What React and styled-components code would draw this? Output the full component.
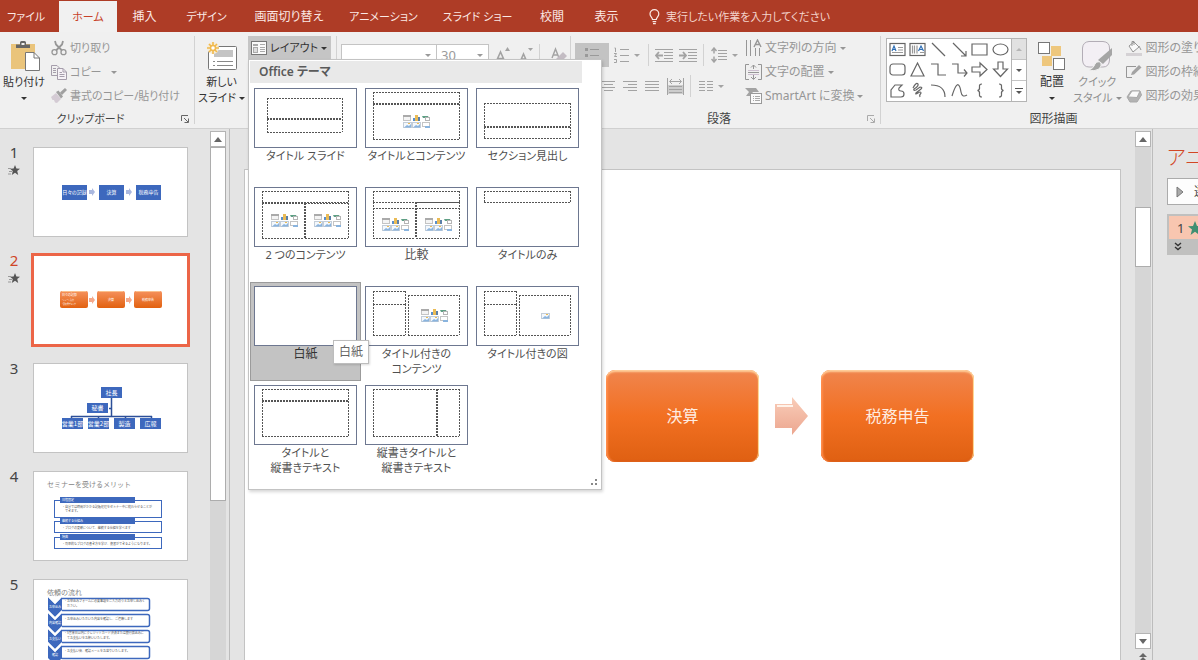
import React from "react";
import styled, { createGlobalStyle, css } from "styled-components";

const GlobalStyle = createGlobalStyle`
  * { box-sizing: border-box; }
  html, body { margin: 0; padding: 0; }
  body, button, input {
    font-family: "Noto Sans", "Noto Sans CJK JP", sans-serif;
    font-size: 12px;
    line-height: 16px;
    font-feature-settings: "palt" 1;
  }
  button {
    margin: 0;
    padding: 0;
    border: 0;
    background: none;
    color: inherit;
    white-space: nowrap;
  }
`;

const App = styled.div`
  display: flex;
  flex-direction: column;
  height: 100vh;
  overflow: hidden;
  background: #e4e4e4;
  color: #444;
`;

/* ---------- tab bar ---------- */

const TabBar = styled.nav`
  display: flex;
  flex: none;
  align-items: stretch;
  height: 32px;
  padding-top: 1px;
  background: #ae3c26;
  color: #fbe9e5;
`;

const Tab = styled.button`
  flex: none;
  width: ${(p) => p.$width}px;
  text-align: center;
  font-size: ${(p) => (p.$kana ? 11 : 12)}px;
  ${(p) =>
    p.$active &&
    css`
      background: #f1f1f1;
      color: #c8432a;
    `}
`;

const TellMe = styled.label`
  display: flex;
  align-items: center;
  gap: 6px;
  flex: 1;
  padding-left: 15px;
`;

const TellMeInput = styled.input`
  flex: 1;
  min-width: 0;
  border: 0;
  padding: 0;
  background: none;
  color: inherit;
  font-size: 11px;
  outline: none;
  &::placeholder {
    color: #f3d3cb;
    opacity: 1;
  }
`;

/* ---------- ribbon ---------- */

const Ribbon = styled.div`
  position: relative;
  z-index: 2;
  display: flex;
  flex: none;
  align-items: flex-start;
  height: 97px;
  padding-top: 4px;
  background: #f0f0f0;
  border-bottom: 1px solid #d0d0d0;
`;

const Group = styled.section`
  flex: none;
  width: ${(p) => p.$width}px;
`;

const GroupBody = styled.div`
  display: flex;
  height: 74px;
  padding-left: ${(p) => p.$pad || 0}px;
`;

const GroupFooter = styled.div`
  display: flex;
  align-items: center;
  height: 18px;
  padding-right: 5px;
`;

const GroupName = styled.span`
  flex: 1;
  text-align: center;
  font-size: ${(p) => (p.$kana ? 11 : 12)}px;
`;

const Divider = styled.i`
  flex: none;
  width: 1px;
  height: 88px;
  background: #d2d2d2;
`;

const SmallDivider = styled.i`
  flex: none;
  width: 1px;
  height: 22px;
  margin: 0 3px;
  background: #d2d2d2;
`;

const Caret = styled.i`
  flex: none;
  display: inline-block;
  border: 3px solid transparent;
  border-bottom-width: 0;
  border-top-color: currentColor;
`;

const BigButton = styled.button`
  display: flex;
  flex-direction: column;
  align-items: center;
  width: ${(p) => p.$width}px;
  height: 74px;
  padding-top: 2px;
  font-size: ${(p) => (p.$kana ? 11 : 12)}px;
  color: ${(p) => (p.$muted ? "#8f8f8f" : "#333")};
`;

const BigIcon = styled.span`
  display: flex;
  align-items: center;
  justify-content: center;
  height: 36px;
`;

const BigLine = styled.span`
  display: flex;
  align-items: center;
  gap: 3px;
  height: 16px;
`;

const CommandColumn = styled.div`
  display: flex;
  flex-direction: column;
  padding-left: 4px;
`;

const Command = styled.button`
  display: flex;
  align-items: center;
  gap: 3px;
  height: 24px;
  color: #969696;
  font-size: ${(p) => (p.$kana ? 11 : 12)}px;
`;

const CommandText = styled.span`
  padding-right: ${(p) => (p.$space ? 6 : 0)}px;
`;

const MenuAnchor = styled.div`
  position: relative;
  margin-left: 2px;
`;

const LayoutButton = styled.button`
  display: flex;
  align-items: center;
  gap: 3px;
  width: 83px;
  height: 24px;
  padding-left: 3px;
  background: #c5c5c5;
  color: #333;
  font-size: 11px;
`;

const FieldRow = styled.div`
  display: flex;
  align-items: center;
  height: 24px;
  margin-top: 7px;
`;

const Combo = styled.label`
  display: flex;
  align-items: center;
  width: ${(p) => p.$width}px;
  height: 22px;
  margin-right: -1px;
  padding: 0 5px 0 4px;
  border: 1px solid #c4c4c4;
  background: #fff;
  color: #9a9a9a;
`;

const ComboInput = styled.input`
  flex: 1;
  min-width: 0;
  padding: 0;
  border: 0;
  outline: none;
  background: none;
  color: inherit;
  font-size: 13px;
`;

const ParagraphTools = styled.div`
  width: 166px;
`;

const ToolButton = styled.button`
  display: flex;
  flex: none;
  align-items: center;
  justify-content: center;
  gap: 5px;
  width: ${(p) => p.$width}px;
  height: 24px;
  color: #a3a3a3;
  background: ${(p) => (p.$active ? "#c3c3c3" : "none")};
`;

const Gallery = styled.div`
  display: flex;
  flex: none;
  width: 141px;
  height: 64px;
  margin-top: 2px;
  border: 1px solid #b4b4b4;
  background: #fff;
`;

const ShapeGrid = styled.div`
  display: grid;
  grid-template-columns: repeat(6, 1fr);
  grid-template-rows: repeat(3, 1fr);
  flex: 1;
`;

const ShapeButton = styled.button`
  display: flex;
  align-items: center;
  justify-content: center;
  color: #666;
`;

const GallerySide = styled.div`
  display: flex;
  flex-direction: column;
  width: 15px;
  border-left: 1px solid #b4b4b4;
`;

const GalleryStep = styled.button`
  display: flex;
  flex: 1;
  flex-direction: column;
  align-items: center;
  justify-content: center;
  gap: 2px;
  color: ${(p) => (p.$off ? "#b5b5b5" : "#555")};
  background: ${(p) => (p.$off ? "#e1e1e1" : "#fff")};
  & + & {
    border-top: 1px solid #c4c4c4;
  }
`;

/* ---------- layout menu ---------- */

const Menu = styled.div`
  position: absolute;
  top: 23px;
  left: 0;
  width: 354px;
  height: 431px;
  padding: 1px;
  background: #fff;
  border: 1px solid #c3c3c3;
  box-shadow: 1px 2px 3px rgba(0, 0, 0, 0.16);
`;

const MenuTitle = styled.h2`
  height: 22px;
  margin: 0 18px 1px 0;
  padding-left: 9px;
  background: #e9e9e9;
  font-size: 12px;
  font-weight: 600;
  line-height: 22px;
  color: #5a5a5a;
`;

const LayoutGrid = styled.div`
  display: grid;
  grid-template-columns: repeat(3, 111px);
  grid-auto-rows: 99px;
`;

const LayoutItem = styled.button`
  display: flex;
  flex-direction: column;
  align-items: center;
  padding: 3px 3px 0;
  border: 1px solid transparent;
  color: #505050;
  ${(p) =>
    p.$active &&
    css`
      background: #c3c3c3;
      border-color: #9b9b9b;
      color: #333;
    `}
`;

const LayoutLabel = styled.span`
  font-size: ${(p) => (p.$kana ? 11 : 12)}px;
  line-height: 15px;
  white-space: pre;
`;

const Tooltip = styled.div`
  position: absolute;
  left: 84px;
  top: 280px;
  padding: 3px 5px;
  border: 1px solid #bdbdbd;
  background: #fff;
  box-shadow: 1px 1px 2px rgba(0, 0, 0, 0.15);
  color: #666;
`;

const Grip = styled.svg`
  position: absolute;
  right: 3px;
  bottom: 2px;
`;

/* ---------- workspace ---------- */

const Workspace = styled.main`
  display: flex;
  flex: 1;
  min-height: 0;
`;

const SlideList = styled.ol`
  flex: none;
  width: 210px;
  margin: 0;
  padding: 15px 0 0;
  list-style: none;
  overflow: hidden;
`;

const SlideRow = styled.li`
  display: flex;
  height: 108px;
`;

const SlideMark = styled.div`
  display: flex;
  flex-direction: column;
  align-items: center;
  gap: 4px;
  width: 28px;
  margin-right: ${(p) => (p.$active ? 3 : 5)}px;
  color: ${(p) => (p.$active ? "#cf4527" : "#444")};
  font-size: 15px;
`;

const Thumb = styled.button`
  display: flex;
  height: 90px;
  margin-top: 3px;
  border: 1px solid #c3c3c3;
  background: #fff;
  ${(p) =>
    p.$active &&
    css`
      height: 94px;
      margin-top: 1px;
      border: 3px solid #ec6547;
    `}
`;

const ScrollBar = styled.div`
  display: flex;
  flex: none;
  flex-direction: column;
  width: 16px;
  padding-top: 2px;
`;

const ScrollTrack = styled.div`
  display: flex;
  flex-direction: column;
  flex: 1;
  padding-top: ${(p) => p.$offset || 0}px;
  background: #d6d6d6;
`;

const ScrollThumb = styled.div`
  height: ${(p) => p.$size};
  border: 1px solid #adadad;
  background: #fff;
`;

const ScrollButton = styled.button`
  display: flex;
  align-items: center;
  justify-content: center;
  flex: none;
  height: 16px;
  border: 1px solid #b4b4b4;
  background: #fff;
`;

const PageStep = styled.button`
  display: flex;
  justify-content: center;
  flex: none;
  height: 11px;
  padding-top: 4px;
`;

const PaneEdge = styled.i`
  flex: none;
  width: 1px;
  margin-left: ${(p) => p.$gap}px;
  background: #bcbcbc;
`;

const Editor = styled.div`
  flex: 1;
  min-width: 0;
  padding: 40px 14px 0;
  overflow: hidden;
`;

const Slide = styled.div`
  display: flex;
  align-items: center;
  justify-content: center;
  aspect-ratio: 16 / 9;
  background: #fff;
  border: 1px solid #c3c3c3;
`;

const StepBox = styled.div`
  display: flex;
  flex: none;
  align-items: center;
  justify-content: center;
  width: 153px;
  height: 92px;
  border-radius: 9px;
  background: linear-gradient(#f0854e, #f27022 50%, #df6012);
  box-shadow: inset 0 3px 2px -1px #ffd09c, inset 3px 0 2px -1px #ff8b49,
    inset -2px 0 1px -1px #ffe3a0, inset 0 -2px 1px #dd5e17;
  color: #ffece0;
  font-size: 16px;
  line-height: 24px;
  font-feature-settings: normal;
`;

const StepArrow = styled.svg`
  flex: none;
  margin: 0 13px 0 16px;
`;

const AnimationPane = styled.aside`
  flex: none;
  width: 45px;
  padding: 16px 0 0 14px;
  overflow: hidden;
  white-space: nowrap;
`;

const PaneTitle = styled.h2`
  margin: 0 0 9px;
  font-size: 20px;
  line-height: 24px;
  font-weight: 300;
  color: #d24726;
  font-family: "Noto Sans CJK JP", sans-serif;
`;

const PlayButton = styled.button`
  display: flex;
  align-items: center;
  gap: 10px;
  width: 160px;
  height: 27px;
  padding-left: 8px;
  border: 1px solid #ababab;
  background: #fdfdfd;
`;

const EffectBox = styled.div`
  width: 160px;
  margin-top: 9px;
  border: 2px solid #c0c0bf;
  background: #c0c0bf;
`;

const EffectRow = styled.div`
  display: flex;
  align-items: center;
  gap: 4px;
  height: 23px;
  padding-left: 8px;
  background: #f8c6b0;
  font-size: 13px;
`;

const ExpandButton = styled.button`
  display: block;
  height: 14px;
  padding-left: 5px;
`;

/* ---------- drawings ---------- */

const Svg = ({ w = 16, h = 16, children, ...rest }) => (
  <svg
    width={w}
    height={h}
    viewBox={`0 0 ${w} ${h}`}
    fill="none"
    stroke="currentColor"
    aria-hidden="true"
    style={{ flex: "none", display: "block" }}
    {...rest}
  >
    {children}
  </svg>
);

const UpArrow = () => (
  <Svg w={8} h={5} stroke="none">
    <path d="M0 5L4 0L8 5Z" fill="#666" />
  </Svg>
);
const DownArrow = () => (
  <Svg w={8} h={5} stroke="none">
    <path d="M0 0L4 5L8 0Z" fill="#666" />
  </Svg>
);

const BulbIcon = () => (
  <Svg w={11} h={16} strokeWidth="1.2">
    <path d="M3.5 10.5C3.5 8.5 1 7.6 1 5A4.3 4.3 0 0 1 9.8 5C9.8 7.6 7.3 8.5 7.3 10.5ZM3.6 12.6H7.2M4 14.6H6.8" />
  </Svg>
);

const LauncherIcon = ({ muted }) => (
  <Svg w={8} h={8} stroke={muted ? "#aaa" : "#666"}>
    <path d="M.5 6V.5H7M3 3L7 7M7.5 3.5V7.5H3.5" />
  </Svg>
);

const PasteIcon = () => (
  <Svg w={32} h={32} stroke="none">
    <rect x="3" y="4" width="24" height="25" fill="#eac47b" />
    <path d="M8 8V4.5H12V2.5Q12 1 13.5 1H16.5Q18 1 18 2.5V4.5H22V8Z" fill="#666" />
    <rect x="13.5" y="3" width="3" height="2" fill="#f0f0f0" />
    <path d="M17.500 12.500H26L31.500 18V30.500H17.500Z" fill="#fff" stroke="#777" />
    <path d="M26 12.500V18H31.500" stroke="#777" />
  </Svg>
);

const CutIcon = () => (
  <Svg strokeWidth="1.3">
    <path d="M4 1L5 4.500L11 10.500M12 1L11 4.500L5 10.500" strokeWidth="1.800" />
    <circle cx="3.500" cy="12.200" r="2.500" />
    <circle cx="12.500" cy="12.200" r="2.500" />
  </Svg>
);

const CopyIcon = () => (
  <Svg stroke="#a59dab">
    <path d="M6.500 11.500H.5V1.500H6L8.500 4" />
    <path d="M6.500 4.500H12L15.500 8V15.500H6.500Z" fill="#f6f2f7" />
    <path d="M12 4.500V8H15M8.500 8.500H11M8.500 10.500H13.500M8.500 12.500H13.500M2 4.500H5M2 6.500H5M2 8.500H5" />
  </Svg>
);

const BrushIcon = () => (
  <Svg stroke="none">
    <path d="M0 9L5 5L10 11L6 15L4 14.500L3 12L1.500 12Z" fill="#d4cbd4" />
    <path d="M5 4L7.500 2.500L12 8.500L10 10.500Z" fill="#a0a0a0" />
    <path d="M9 4.500L14 0L16 2L11 7Z" fill="#a0a0a0" />
  </Svg>
);

const NewSlideIcon = () => (
  <Svg w={32} h={30} stroke="none">
    <rect x="2.500" y="5.500" width="28" height="23" rx="1" fill="#fff" stroke="#777" />
    <rect x="8" y="9" width="19" height="7" fill="#c4c4c4" />
    <path d="M7 20.500H9M11 20.500H27M7 24.500H9M11 24.500H27" stroke="#888" />
    <circle cx="7" cy="7" r="6" fill="#f5ecd8" />
    <path d="M7 1V4M7 10V13M1 7H4M10 7H13M3 3L5 5M9 9L11 11M11 3L9 5M5 9L3 11" stroke="#f0b94e" strokeWidth="1.600" />
    <circle cx="7" cy="7" r="2.500" fill="#fff" stroke="#f0b94e" strokeWidth="1.500" />
  </Svg>
);

const LayoutIcon = () => (
  <Svg stroke="#777">
    <rect x=".5" y="1.500" width="15" height="13" fill="#fafafa" />
    <rect x="2" y="4" width="5" height="2" fill="#aaa" stroke="none" />
    <rect x="2.500" y="7.500" width="4" height="5" fill="#ddd" stroke="#aaa" />
    <path d="M9 4.500H14M9 7.500H14M9 9.500H14M9 11.500H14" stroke="#aaa" />
  </Svg>
);

const FontSizeIcon = ({ up }) => (
  <Svg w={16} h={16} stroke="#a3a3a3" strokeWidth="1.600">
    <path d={up ? "M1 15L5.500 5L10 15M2.600 11.500H8.400" : "M1 15L4.500 7L8 15M2.400 12H6.600"} />
    <path d={up ? "M10 4L12.500 0L15 4Z" : "M9 1H14L11.500 4Z"} fill="#a3a3a3" stroke="none" />
  </Svg>
);

const ClearIcon = () => (
  <Svg stroke="#a3a3a3" strokeWidth="1.400">
    <path d="M1 11L4.500 2L8 11M2.500 8H6.500" />
    <path d="M5 12L12 5L16 9L10 15H7Z" fill="#c3bcc3" stroke="none" />
  </Svg>
);

const BulletIcon = () => (
  <Svg w={14} h={16} stroke="#999">
    <path d="M5 2.500H14M5 8.500H14" />
    <path d="M0 2.500H3M0 8.500H3" strokeWidth="3" />
  </Svg>
);
const NumberIcon = () => (
  <Svg w={15} h={16}>
    <path d="M6 2.500H15M6 8.500H15M6 14.500H15" />
    <path d="M.5 1H1.500V5M0 6.500H2.500L.5 9.500H3M0 12.500H2.500V15.500H0" />
  </Svg>
);
const IndentIcon = ({ out }) => (
  <Svg w={18} h={16}>
    <path d="M0 2.500H18M9 5.500H18M9 8.500H18M9 11.500H18M0 14.500H18" />
    <path d={out ? "M8 8.500H1M4 5L1 8.500L4 12" : "M0 8.500H7M4 5L7 8.500L4 12"} strokeWidth="1.800" />
  </Svg>
);
const SpacingIcon = () => (
  <Svg w={16} h={16}>
    <path d="M7 3.500H16M7 6.500H16M7 9.500H16M7 12.500H16" />
    <path d="M3 1.500V6.500M0.500 4L3 1L5.500 4M3 9.500V14.500M0.500 12L3 15L5.500 12" strokeWidth="1.500" />
  </Svg>
);
const alignRows = {
  left: "M0 1.500H14M0 4.500H9M0 7.500H14M0 10.500H9",
  center: "M0 1.500H14M3 4.500H12M0 7.500H14M3 10.500H12",
  right: "M0 1.500H14M5 4.500H14M0 7.500H14M5 10.500H14",
  justify: "M0 1.500H14M0 4.500H14M0 7.500H14M0 10.500H14",
  columns: "M0 1.500H6M8 1.500H14M0 4.500H6M8 4.500H14M0 7.500H6M8 7.500H14M0 10.500H6M8 10.500H14",
};
const AlignIcon = ({ kind }) => (
  <Svg w={14} h={12}>
    <path d={alignRows[kind]} />
  </Svg>
);
const DistributeIcon = () => (
  <Svg w={17} h={17}>
    <path d="M.5 0V17M16.500 0V17M3 3.500H14M5 1L2.500 3.500L5 6M12 1L14.500 3.500L12 6" />
    <rect x="1" y="7" width="15" height="9" fill="#ccc" stroke="none" />
    <path d="M2 8.500H15M2 11.500H15M2 14.500H15" />
  </Svg>
);

const TextDirectionIcon = () => (
  <Svg w={17} h={18}>
    <path d="M1.500 1V17M5.500 1V17M10.500 9V17M14.500 9V17" />
    <path d="M9 8L12.500 1L16 8M10 5.500H15" strokeWidth="1.400" />
  </Svg>
);
const TextPlaceIcon = () => (
  <Svg w={17} h={16}>
    <path d="M4 .5H.5V15.500H4M13 .5H16.500V15.500H13M3 8.500H14M8.500 1V5M6 3.500L8.500 1L11 3.500M8.500 15V11M6 13L8.500 15.500L11 13" />
    <path d="M3 6.500H14M3 10.500H14" stroke="#cdbfd0" />
  </Svg>
);
const SmartArtIcon = () => (
  <Svg w={17} h={18} stroke="none">
    <path d="M0 1H11L14 5H8L5 9H1L4 5Z" fill="#a3a3a3" />
    <rect x="5.500" y="6.500" width="11" height="10" fill="#fafafa" stroke="#999" />
    <path d="M8 9.500H9M10 9.500H15M8 11.500H9M10 11.500H15M8 13.500H9M10 13.500H15" stroke="#aaa" />
  </Svg>
);

const Shape = ({ d, children }) => (
  <Svg w={17} h={17} strokeWidth="1.2">
    {d && <path d={d} />}
    {children}
  </Svg>
);

const shapes = [
  { name: "テキスト ボックス", body: <Shape><rect x="1" y="2.500" width="15" height="12" /><path d="M9 6.500H14M9 9H14M3 11.500H14" stroke="#999" /><path d="M3 10L5 5L7 10M4 8.500H6" stroke="#2f6fb5" /></Shape> },
  { name: "縦書きテキスト ボックス", body: <Shape><rect x="1" y="2.500" width="15" height="12" /><path d="M3.500 4.500V12.500M5.500 4.500V12.500M8 4.500V12.500M11 11.500H15" stroke="#999" /><path d="M9.500 10L12 5L14.500 10M10.500 8.500H13.500" stroke="#2f6fb5" /></Shape> },
  { name: "直線", d: "M2 2L15 15" },
  { name: "矢印", d: "M2 2L15 15M15 10V15H10" },
  { name: "正方形/長方形", d: "M1 3H16V14H1Z" },
  { name: "楕円", body: <Shape><ellipse cx="8.500" cy="8.500" rx="7.500" ry="5.500" /></Shape> },
  { name: "角丸四角形", body: <Shape><rect x="1" y="3" width="15" height="11" rx="3" /></Shape> },
  { name: "二等辺三角形", d: "M8.500 2L15 15H2Z" },
  { name: "カギ線コネクタ", d: "M1 3H8V14H16" },
  { name: "カギ線矢印コネクタ", d: "M1 3H7V12H16M13 8.500L16 12L13 15.500" },
  { name: "右矢印", d: "M1 6H9V2L16 8.500L9 15V11H1Z" },
  { name: "下矢印", d: "M6 1H11V8H15.500L8.500 15.500L1.500 8H6Z" },
  { name: "フリーフォーム: 図形", d: "M2 15V8L6 3H13L10 6Q9 9 12 9Q15 9 15 12Q15 15 12 15Z" },
  { name: "フリーフォーム: フリーハンド", d: "M4 6Q7 0 9 2Q10 4 5 7Q4 9 7 8L11 5Q14 5 12 7L7 11Q6 13 9 11Q12 9 12 11Q10 13 11 15" },
  { name: "円弧", d: "M1 3Q15 3 15 15" },
  { name: "曲線", d: "M1 14Q5 1 7.500 3Q9 4 10 10Q11 16 16 13" },
  { name: "左中かっこ", d: "M11 2Q8 2 8.500 5Q9 8 6.500 8.500Q9 9 8.500 12Q8 15 11 15" },
  { name: "右中かっこ", d: "M7 2Q10 2 9.500 5Q9 8 11.500 8.500Q9 9 9.500 12Q10 15 7 15" },
];

const ArrangeIcon = () => (
  <Svg w={30} h={30} stroke="#777">
    <rect x="14" y="5" width="10" height="10" fill="#eec77d" stroke="none" />
    <rect x="5" y="15" width="10" height="10" fill="#eec77d" stroke="none" />
    <rect x="1.500" y="1.500" width="11" height="11" fill="#fff" />
    <rect x="16.500" y="17.500" width="11" height="11" fill="#fff" />
  </Svg>
);
const QuickStyleIcon = () => (
  <Svg w={32} h={32} stroke="#b3adb6">
    <path d="M8 1.500H22Q28.500 2 28.500 8V20Q28 27 22 27H8Q2 27 1.500 20V8Q2 2 8 1.500Z" fill="#f3eff4" />
    <path d="M17 20L31 8V15L22 24Z" fill="#a5a5a5" stroke="none" />
    <path d="M8 30Q13 28 14 24Q17 20 20 23Q21 26 18 29Q13 32 8 30Z" fill="#a5a5a5" stroke="#f0f0f0" />
  </Svg>
);
const FillIcon = () => (
  <Svg w={17} h={17}>
    <path d="M3 6L8 2L13 7L7 12Z" fill="#fafafa" />
    <path d="M6 6V1.500H8V5M13 6L15 10" />
    <rect x="0" y="13" width="16" height="3" fill="#d5d2d5" stroke="none" />
  </Svg>
);
const OutlineIcon = () => (
  <Svg w={17} h={17}>
    <path d="M10 2.500H.5V13.500H6" />
    <path d="M5 11L6 8L13 1L15.500 3.500L8 10.500Z" fill="#a3a3a3" stroke="none" />
  </Svg>
);
const EffectIcon = () => (
  <Svg w={17} h={17} stroke="#a9a9a9">
    <path d="M1 9L5 3H14L15.500 7L11 14H4Z" fill="#b3b3b3" />
    <path d="M2 9L6 3H14L11 9.500Z" fill="#fafafa" />
  </Svg>
);

const StarMark = () => (
  <Svg w={12} h={12} stroke="none">
    <path d="M7 1L8.400 4.600L12 4.800L9.200 7.100L10.200 11L7 8.800L3.800 11L4.800 7.100L2 4.800L5.600 4.600Z" fill="#555" />
    <path d="M0 4.500H3M1 7.500H4M0 10H3" stroke="#999" />
  </Svg>
);

/* A block of miniature content placeholders: table, chart, SmartArt, pictures and video */
const ContentIcons = ({ x, y }) => (
  <g transform={`translate(${x} ${y})`}>
    <rect x="0.500" y="0.500" width="7" height="5" fill="#f4f4f4" stroke="#c4c4c4" />
    <path d="M0 1H8" stroke="#aaa" strokeWidth="2" />
    <path d="M11 3V6" stroke="#5b8fcb" strokeWidth="2" />
    <path d="M13.500 0V6" stroke="#eabb55" strokeWidth="3" />
    <path d="M16 2V6" stroke="#5b7fa8" strokeWidth="2" />
    <path d="M19 1H25L26 3H20Z" fill="#5f9f84" />
    <rect x="22.500" y="2.500" width="4" height="3" fill="#fff" stroke="#b5b5b5" />
    <PictureMini x={0} y={7} />
    <PictureMini x={9} y={7} />
    <rect x="19.500" y="7.500" width="7" height="4" fill="#fff" stroke="#c4c4c4" />
    <path d="M22 12H27" stroke="#8ab4de" strokeWidth="2" />
  </g>
);
const PictureMini = ({ x, y }) => (
  <g transform={`translate(${x} ${y})`}>
    <rect x="0.500" y="0.500" width="8" height="5" fill="#f4f8fc" stroke="#c3cdd8" />
    <path d="M1 5.500L4 3L6 4L8 2V5.500Z" fill="#8ab4de" />
    <rect x="5" y="1" width="2" height="1" fill="#eabb55" />
  </g>
);

const LayoutArt = ({ boxes, icons = [], picture }) => (
  <Svg w={103} h={60} stroke="none">
    <rect x=".5" y=".5" width="102" height="59" fill="#fff" stroke="#6d7790" />
    {boxes.map(([x1, y1, x2, y2], i) => (
      <path
        key={i}
        d={`M${x1} ${y1 + 0.5}H${x2}M${x1} ${y2 + 0.5}H${x2}M${x1 + 0.5} ${y1}V${y2}M${x2 + 0.5} ${y1}V${y2}`}
        stroke="#555"
        strokeDasharray="2 1"
      />
    ))}
    {icons.map(([x, y], i) => (
      <ContentIcons key={i} x={x} y={y} />
    ))}
    {picture && <PictureMini x={picture[0]} y={picture[1]} />}
  </Svg>
);

const layouts = [
  { label: "タイトル スライド", boxes: [[13, 10, 88, 30], [13, 31, 88, 44]] },
  { label: "タイトルとコンテンツ", boxes: [[8, 4, 94, 15], [8, 16, 94, 51]], icons: [[38, 27]] },
  { label: "セクション見出し", boxes: [[8, 15, 94, 38], [8, 39, 94, 50]] },
  { label: "2 つのコンテンツ", boxes: [[8, 4, 94, 15], [8, 16, 50, 51], [51, 16, 94, 51]], icons: [[17, 27], [60, 27]] },
  { label: "比較", kanji: true, boxes: [[8, 4, 94, 15], [8, 15, 50, 21], [51, 15, 94, 21], [8, 21, 50, 51], [51, 21, 94, 51]], icons: [[17, 31], [60, 31]] },
  { label: "タイトルのみ", boxes: [[8, 4, 94, 15]] },
  { label: "白紙", kanji: true, boxes: [], active: true },
  { label: "タイトル付きの\nコンテンツ", boxes: [[8, 5, 40, 18], [8, 18, 40, 49], [43, 9, 94, 49]], icons: [[56, 23]] },
  { label: "タイトル付きの図", boxes: [[8, 5, 40, 18], [8, 18, 40, 49], [43, 9, 94, 49]], picture: [65, 27] },
  { label: "タイトルと\n縦書きテキスト", boxes: [[8, 4, 94, 15], [8, 16, 94, 51]] },
  { label: "縦書きタイトルと\n縦書きテキスト", boxes: [[8, 4, 71, 51], [72, 4, 94, 51]] },
];

/* ---------- slide thumbnails ---------- */

const BLUE = "#3d68bd";

const T = ({ x, y, size = 4, fill = "#fff", anchor = "middle", wide, children }) => (
  <text
    x={x}
    y={y}
    fontSize={size}
    fill={fill}
    textAnchor={anchor}
    stroke="none"
    fontFamily="Noto Sans CJK JP"
    style={wide ? { fontFeatureSettings: "normal" } : undefined}
  >
    {children}
  </text>
);

const BlueBox = ({ x, y, w, h, label, size, ty }) => (
  <g>
    <rect x={x} y={y} width={w} height={h} fill={BLUE} />
    <T x={x + w / 2} y={ty} size={size}>{label}</T>
  </g>
);

const MiniArrow = ({ x, fill }) => (
  <path d={`M${x} 42H${x + 3}V40L${x + 6} 44L${x + 3} 48V46H${x}Z`} fill={fill} />
);

const ThumbOne = () => (
  <Svg w={153} h={88} stroke="none">
    <BlueBox x={28} y={37} w={25} h={15} label="日々の記録" size={5} ty={46} />
    <BlueBox x={65} y={37} w={25} h={15} label="決算" size={5} ty={46} />
    <BlueBox x={102} y={37} w={25} h={15} label="税務申告" size={5} ty={46} />
    <MiniArrow x={55} fill="#aab8df" />
    <MiniArrow x={92} fill="#aab8df" />
  </Svg>
);

const ThumbTwo = () => (
  <Svg w={153} h={88} stroke="none">
    <defs>
      <linearGradient id="mini" x1="0" y1="0" x2="0" y2="1">
        <stop offset="0" stopColor="#f5915c" />
        <stop offset="1" stopColor="#e26110" />
      </linearGradient>
    </defs>
    {[26, 63, 100].map((x) => (
      <g key={x}>
        <rect x={x} y="35" width="28" height="17" rx="2" fill="url(#mini)" />
        <path d={`M${x + 2} 35.500H${x + 26}`} stroke="#fbc08c" />
      </g>
    ))}
    <T x={28} y={40} size={3} anchor="start">日々の記録</T>
    <T x={28} y={45} size={2} anchor="start">・レシート入力</T>
    <T x={28} y={49} size={2} anchor="start">・領収書チェック</T>
    <T x={77} y={45} size={3}>決算</T>
    <T x={114} y={45} size={3}>税務申告</T>
    <MiniArrow x={55} fill="#f4a98c" />
    <MiniArrow x={92} fill="#f4a98c" />
  </Svg>
);

const ThumbThree = () => (
  <Svg w={153} h={88} stroke="none">
    <path d="M77.500 34V52M75 44.500H78M37 52.500H118M37.500 52V55M64.500 52V55M91.500 52V55M117.500 52V55" stroke="#2c4f99" strokeWidth="1.500" />
    <BlueBox x={67} y={23} w={21} h={11} label="社長" size={6} ty={31} />
    <BlueBox x={53} y={39} w={21} h={10} label="秘書" size={6} ty={46} />
    <BlueBox x={28} y={54} w={21} h={11} label="営業1部" size={6} ty={62} />
    <BlueBox x={54} y={54} w={21} h={11} label="営業2部" size={6} ty={62} />
    <BlueBox x={80} y={54} w={21} h={11} label="製造" size={6} ty={62} />
    <BlueBox x={106} y={54} w={21} h={11} label="広報" size={6} ty={62} />
  </Svg>
);

const merits = [
  { y: 28, h: 17, title: "日程固定", lines: ["・自分では時間がかかる記帳処理をセミナー中に終わらせることが", "　できます。"] },
  { y: 49, h: 11, title: "継続する仕組み", lines: ["・ブログの更新について、継続する仕組を学べます"] },
  { y: 65, h: 11, title: "特典", lines: ["・効率的なブログの書き方を学び、復習ができるようになります。"] },
];

const ThumbFour = () => (
  <Svg w={153} h={88} stroke="none">
    <T x={13} y={15} size={7} fill="#858585" anchor="start" wide>セミナーを受けるメリット</T>
    {merits.map((m) => (
      <g key={m.title}>
        <rect x="20.500" y={m.y + 0.5} width="107" height={m.h} fill="#fff" stroke={BLUE} />
        <rect x="26" y={m.y - 3} width="75" height="6" fill={BLUE} />
        <T x={28} y={m.y + 1} size={3} anchor="start" wide>{m.title}</T>
        {m.lines.map((line, i) => (
          <T key={line} x={28} y={m.y + 8 + i * 4} size={3} fill="#555" anchor="start" wide>{line}</T>
        ))}
      </g>
    ))}
  </Svg>
);

const flow = [
  { y: 18, name: "お申込み", lines: ["・お申込みフォームに必要事項をご入力のうえお申し込みく", "　ださい。"] },
  { y: 34, name: "内容確認", lines: ["・お申込みいただいた内容を確認し、ご連絡します"] },
  { y: 50, name: "お支払い", lines: ["・5営業日以内にクレジットカード決済または銀行振込みに", "　てお支払いをお願いいたします。"] },
  { y: 66, name: "確認", lines: ["・お支払い後、確認メールをお送りいたします。"] },
];

const ThumbFive = () => (
  <Svg w={153} h={88} stroke="none">
    <T x={13} y={15} size={7} fill="#858585" anchor="start" wide>依頼の流れ</T>
    {flow.map((f) => (
      <g key={f.name}>
        <rect x="26.500" y={f.y + 0.5} width="89" height="12" rx="2" fill="#fff" stroke={BLUE} strokeWidth="1.500" />
        <path d={`M14 ${f.y - 1}L21 ${f.y + 6}L28 ${f.y - 1}V${f.y + 12}L21 ${f.y + 19}L14 ${f.y + 12}Z`} fill={BLUE} />
        <T x={21} y={f.y + 10} size={3}>{f.name}</T>
        {f.lines.map((line, i) => (
          <T key={line} x={30} y={f.y + (f.lines.length > 1 ? 4 : 6) + i * 5} size={3} fill="#555" anchor="start" wide>{line}</T>
        ))}
      </g>
    ))}
    {flow.map((f) => (
      <path key={f.name} d={`M14 ${f.y - 1}L21 ${f.y + 6}L28 ${f.y - 1}V${f.y - 4}L21 ${f.y + 3}L14 ${f.y - 4}Z`} fill="#fff" />
    ))}
  </Svg>
);

const slides = [
  { art: <ThumbOne />, star: true },
  { art: <ThumbTwo />, star: true, active: true },
  { art: <ThumbThree /> },
  { art: <ThumbFour /> },
  { art: <ThumbFive /> },
];

const tabs = [
  { name: "ファイル", width: 52, kana: true },
  { name: "ホーム", width: 58, kana: true },
  { name: "挿入", width: 55 },
  { name: "デザイン", width: 69, kana: true },
  { name: "画面切り替え", width: 96 },
  { name: "アニメーション", width: 93, kana: true },
  { name: "スライド ショー", width: 95, kana: true },
  { name: "校閲", width: 54 },
  { name: "表示", width: 55 },
];

const TabStrip = styled.div`
  display: flex;
  padding-left: 0;
  & > :first-child {
    margin-right: 7px;
  }
`;

const Arrow = () => (
  <StepArrow width="33" height="38" viewBox="0 0 33 38" aria-hidden="true">
    <defs>
      <linearGradient id="arrow" x1="0" y1="0" x2="0" y2="1">
        <stop offset="0" stopColor="#f9cdb9" />
        <stop offset="1" stopColor="#eca68f" />
      </linearGradient>
    </defs>
    <path d="M0 7H17V0L33 19L17 38V31H0Z" fill="url(#arrow)" />
    <path d="M2 9H18" stroke="#fff3ea" strokeWidth="2" />
  </StepArrow>
);

export default function PresentationEditor() {
  return (
    <App>
      <GlobalStyle />
      <TabBar>
        <TabStrip>
          {tabs.map((t) => (
            <Tab key={t.name} $width={t.width} $kana={t.kana} $active={t.name === "ホーム"}>{t.name}</Tab>
          ))}
        </TabStrip>
        <TellMe>
          <BulbIcon />
          <TellMeInput aria-label="操作アシスト" placeholder="実行したい作業を入力してください" />
        </TellMe>
      </TabBar>

      <Ribbon>
        <Group $width={194}>
          <GroupBody $pad={1}>
            <BigButton $width={46} $kana>
              <BigIcon><PasteIcon /></BigIcon>
              <BigLine>貼り付け</BigLine>
              <BigLine><Caret /></BigLine>
            </BigButton>
            <CommandColumn>
              <Command $kana><CutIcon /><CommandText>切り取り</CommandText></Command>
              <Command $kana><CopyIcon /><CommandText $space>コピー</CommandText><Caret /></Command>
              <Command $kana><BrushIcon /><CommandText>書式のコピー/貼り付け</CommandText></Command>
            </CommandColumn>
          </GroupBody>
          <GroupFooter>
            <GroupName $kana>クリップボード</GroupName>
            <button aria-label="クリップボードの設定"><LauncherIcon /></button>
          </GroupFooter>
        </Group>
        <Divider />

        <Group $width={141}>
          <GroupBody $pad={2}>
            <BigButton $width={49} $kana>
              <BigIcon><NewSlideIcon /></BigIcon>
              <BigLine>新しい</BigLine>
              <BigLine>スライド<Caret /></BigLine>
            </BigButton>
            <MenuAnchor>
              <LayoutButton aria-expanded="true"><LayoutIcon />レイアウト<Caret /></LayoutButton>
              <Menu>
                <MenuTitle>Office テーマ</MenuTitle>
                <LayoutGrid>
                  {layouts.map((l) => (
                    <LayoutItem key={l.label} $active={l.active}>
                      <LayoutArt boxes={l.boxes} icons={l.icons} picture={l.picture} />
                      <LayoutLabel $kana={!l.kanji}>{l.label}</LayoutLabel>
                    </LayoutItem>
                  ))}
                </LayoutGrid>
                <Tooltip role="tooltip">白紙</Tooltip>
                <Grip width="8" height="8" viewBox="0 0 8 8" aria-hidden="true">
                  <path d="M5 0H7V2H5ZM5 4H7V6H5ZM1 4H3V6H1Z" fill="#888" />
                </Grip>
              </Menu>
            </MenuAnchor>
          </GroupBody>
        </Group>
        <Divider />

        <Group $width={233}>
          <GroupBody $pad={4}>
            <FieldRow>
              <Combo $width={96}><ComboInput aria-label="フォント" /><Caret /></Combo>
              <Combo $width={53}><ComboInput aria-label="フォント サイズ" defaultValue="30" /><Caret /></Combo>
              <ToolButton $width={30} aria-label="拡大"><FontSizeIcon up /></ToolButton>
              <ToolButton $width={18} aria-label="縮小"><FontSizeIcon /></ToolButton>
              <SmallDivider />
              <ToolButton $width={32} aria-label="書式のクリア"><ClearIcon /></ToolButton>
            </FieldRow>
          </GroupBody>
        </Group>
        <Divider />

        <Group $width={309}>
          <GroupBody $pad={4}>
            <ParagraphTools>
              <FieldRow>
                <ToolButton $width={34} $active aria-label="箇条書き"><BulletIcon /></ToolButton>
                <ToolButton $width={36} aria-label="段落番号"><NumberIcon /><Caret /></ToolButton>
                <SmallDivider />
                <ToolButton $width={24} aria-label="インデントを減らす"><IndentIcon out /></ToolButton>
                <ToolButton $width={24} aria-label="インデントを増やす"><IndentIcon /></ToolButton>
                <SmallDivider />
                <ToolButton $width={34} aria-label="行間"><SpacingIcon /><Caret /></ToolButton>
              </FieldRow>
              <FieldRow>
                <ToolButton $width={22} aria-label="左揃え"><AlignIcon kind="left" /></ToolButton>
                <ToolButton $width={22} aria-label="中央揃え"><AlignIcon kind="center" /></ToolButton>
                <ToolButton $width={22} aria-label="右揃え"><AlignIcon kind="right" /></ToolButton>
                <ToolButton $width={22} aria-label="両端揃え"><AlignIcon kind="justify" /></ToolButton>
                <ToolButton $width={24} aria-label="均等割り付け"><DistributeIcon /></ToolButton>
                <SmallDivider />
                <ToolButton $width={34} aria-label="段の追加"><AlignIcon kind="columns" /><Caret /></ToolButton>
              </FieldRow>
            </ParagraphTools>
            <CommandColumn>
              <Command><TextDirectionIcon />文字列の方向<Caret /></Command>
              <Command><TextPlaceIcon />文字の配置<Caret /></Command>
              <Command><SmartArtIcon />SmartArt に変換<Caret /></Command>
            </CommandColumn>
          </GroupBody>
          <GroupFooter>
            <GroupName>段落</GroupName>
            <button aria-label="段落の設定"><LauncherIcon muted /></button>
          </GroupFooter>
        </Group>
        <Divider />

        <Group $width={350}>
          <GroupBody $pad={5}>
            <Gallery>
              <ShapeGrid>
                {shapes.map((s) => (
                  <ShapeButton key={s.name} aria-label={s.name}>{s.body || <Shape d={s.d} />}</ShapeButton>
                ))}
              </ShapeGrid>
              <GallerySide>
                <GalleryStep $off aria-label="前の行">
                  <Svg w={6} h={3} stroke="none"><path d="M0 3L3 0L6 3Z" fill="currentColor" /></Svg>
                </GalleryStep>
                <GalleryStep aria-label="次の行"><Caret /></GalleryStep>
                <GalleryStep aria-label="その他">
                  <Svg w={8} h={1}><path d="M0 .5H8" /></Svg>
                  <Caret />
                </GalleryStep>
              </GallerySide>
            </Gallery>
            <CommandColumn>
              <BigButton $width={42}>
                <BigIcon><ArrangeIcon /></BigIcon>
                <BigLine>配置</BigLine>
                <BigLine><Caret /></BigLine>
              </BigButton>
            </CommandColumn>
            <BigButton $width={50} $muted $kana>
              <BigIcon><QuickStyleIcon /></BigIcon>
              <BigLine>クイック</BigLine>
              <BigLine>スタイル<Caret /></BigLine>
            </BigButton>
            <CommandColumn>
              <Command><FillIcon />図形の塗りつぶし</Command>
              <Command><OutlineIcon />図形の枠線</Command>
              <Command><EffectIcon />図形の効果</Command>
            </CommandColumn>
          </GroupBody>
          <GroupFooter>
            <GroupName>図形描画</GroupName>
          </GroupFooter>
        </Group>
      </Ribbon>

      <Workspace>
        <SlideList>
          {slides.map((s, i) => (
            <SlideRow key={i}>
              <SlideMark $active={s.active}>
                {i + 1}
                {s.star && <StarMark />}
              </SlideMark>
              <Thumb $active={s.active} aria-label={`スライド ${i + 1}`}>{s.art}</Thumb>
            </SlideRow>
          ))}
        </SlideList>
        <ScrollBar>
          <ScrollButton aria-label="上へ"><UpArrow /></ScrollButton>
          <ScrollTrack>
            <ScrollThumb $size="69%" />
          </ScrollTrack>
        </ScrollBar>
        <PaneEdge $gap={3} />

        <Editor>
          <Slide>
            <StepBox />
            <Arrow />
            <StepBox>決算</StepBox>
            <Arrow />
            <StepBox>税務申告</StepBox>
          </Slide>
        </Editor>

        <ScrollBar>
          <ScrollButton aria-label="上へ"><UpArrow /></ScrollButton>
          <ScrollTrack $offset={60}>
            <ScrollThumb $size="60px" />
          </ScrollTrack>
          <ScrollButton aria-label="下へ"><DownArrow /></ScrollButton>
          <PageStep aria-label="前のスライド">
            <Svg w={8} h={8} stroke="none">
              <path d="M0 4L4 0L8 4ZM0 8L4 4L8 8Z" fill="#666" />
            </Svg>
          </PageStep>
        </ScrollBar>
        <PaneEdge $gap={1} />

        <AnimationPane>
          <PaneTitle>アニメーション</PaneTitle>
          <PlayButton>
            <Svg w={8} h={12} stroke="#777"><path d="M1 1L7 6L1 11Z" fill="#aaa" /></Svg>
            選択した項目から再生
          </PlayButton>
          <EffectBox>
            <EffectRow>
              1
              <Svg w={14} h={14} stroke="none">
                <path d="M7 0L9 5L14 5.200L10 8.500L11.400 14L7 10.800L2.600 14L4 8.500L0 5.200L5 5Z" fill="#3f8f72" />
              </Svg>
            </EffectRow>
            <ExpandButton aria-label="展開">
              <Svg w={8} h={9} stroke="#333" strokeWidth="1.400"><path d="M1 1L4 3.500L7 1M1 5L4 7.500L7 5" /></Svg>
            </ExpandButton>
          </EffectBox>
        </AnimationPane>
      </Workspace>
    </App>
  );
}
